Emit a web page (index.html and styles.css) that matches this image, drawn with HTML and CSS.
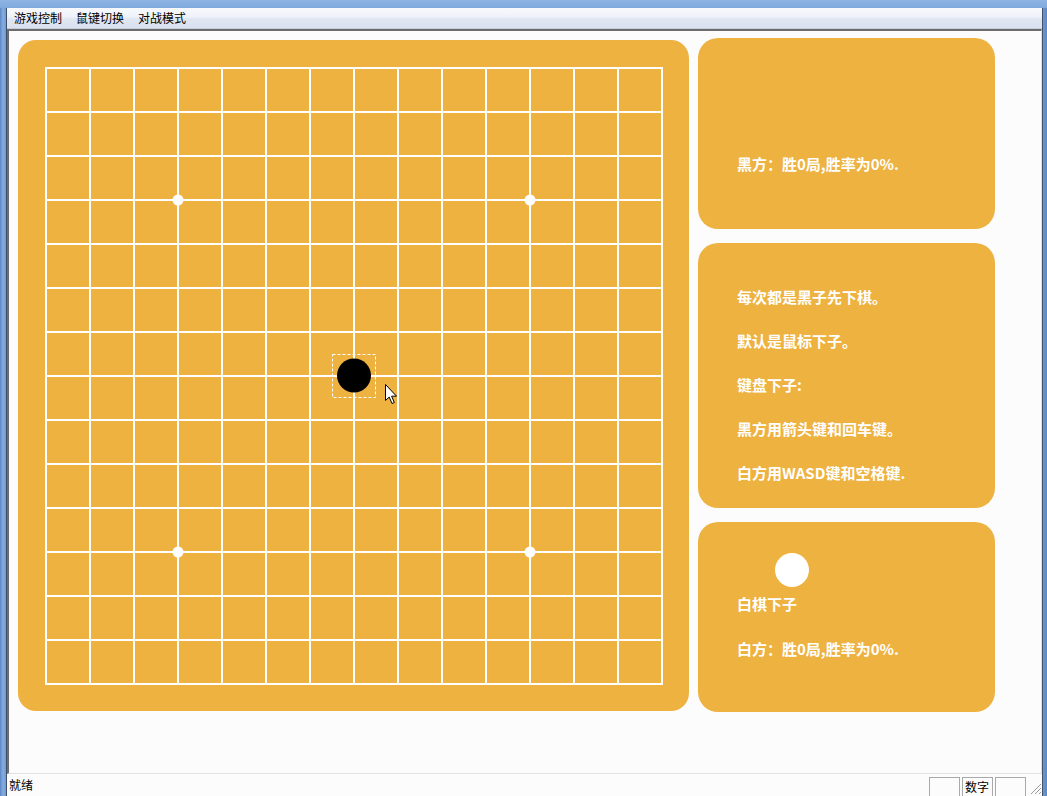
FILE: index.html
```html
<!DOCTYPE html>
<html lang="zh-CN">
<head>
<meta charset="utf-8">
<title>五子棋</title>
<link rel="stylesheet" href="styles.css">
</head>
<body>
<div class="frame">
  <div class="window">
    <div class="menubar">
      <span class="menu-item">游戏控制</span>
      <span class="menu-item">鼠键切换</span>
      <span class="menu-item">对战模式</span>
    </div>
    <div class="client">
      <div class="board">
        <svg class="grid" width="618" height="618" viewBox="0 0 618 618" xmlns="http://www.w3.org/2000/svg">
          <g stroke="#ffffff" stroke-width="2">
            <line x1="1" y1="0" x2="1" y2="618"/>
            <line x1="45" y1="0" x2="45" y2="618"/>
            <line x1="89" y1="0" x2="89" y2="618"/>
            <line x1="133" y1="0" x2="133" y2="618"/>
            <line x1="177" y1="0" x2="177" y2="618"/>
            <line x1="221" y1="0" x2="221" y2="618"/>
            <line x1="265" y1="0" x2="265" y2="618"/>
            <line x1="309" y1="0" x2="309" y2="618"/>
            <line x1="353" y1="0" x2="353" y2="618"/>
            <line x1="397" y1="0" x2="397" y2="618"/>
            <line x1="441" y1="0" x2="441" y2="618"/>
            <line x1="485" y1="0" x2="485" y2="618"/>
            <line x1="529" y1="0" x2="529" y2="618"/>
            <line x1="573" y1="0" x2="573" y2="618"/>
            <line x1="617" y1="0" x2="617" y2="618"/>
            <line y1="1" x1="0" y2="1" x2="618"/>
            <line y1="45" x1="0" y2="45" x2="618"/>
            <line y1="89" x1="0" y2="89" x2="618"/>
            <line y1="133" x1="0" y2="133" x2="618"/>
            <line y1="177" x1="0" y2="177" x2="618"/>
            <line y1="221" x1="0" y2="221" x2="618"/>
            <line y1="265" x1="0" y2="265" x2="618"/>
            <line y1="309" x1="0" y2="309" x2="618"/>
            <line y1="353" x1="0" y2="353" x2="618"/>
            <line y1="397" x1="0" y2="397" x2="618"/>
            <line y1="441" x1="0" y2="441" x2="618"/>
            <line y1="485" x1="0" y2="485" x2="618"/>
            <line y1="529" x1="0" y2="529" x2="618"/>
            <line y1="573" x1="0" y2="573" x2="618"/>
            <line y1="617" x1="0" y2="617" x2="618"/>
          </g>
          <g fill="#ffffff">
            <circle cx="133" cy="133" r="5.5"/>
            <circle cx="485" cy="133" r="5.5"/>
            <circle cx="133" cy="485" r="5.5"/>
            <circle cx="485" cy="485" r="5.5"/>
          </g>
          <rect x="287.5" y="287.5" width="43" height="43" fill="none" stroke="#ffffff" stroke-width="1" stroke-dasharray="3 2"/>
          <circle cx="309" cy="308.5" r="17" fill="#000000"/>
          <path d="M340.5 317.5 L340.5 333.5 L344.2 330 L347 336.5 L349.3 335.5 L346.6 329.2 L351.5 329.2 Z" fill="#ffffff" stroke="#000000" stroke-width="1" stroke-linejoin="miter"/>
        </svg>
      </div>
      <div class="side">
        <div class="panel panel-score">
          <p class="panel-line">黑方：胜0局,胜率为0%.</p>
        </div>
        <div class="panel panel-help">
          <p class="help-line">每次都是黑子先下棋。</p>
          <p class="help-line">默认是鼠标下子。</p>
          <p class="help-line">键盘下子:</p>
          <p class="help-line">黑方用箭头键和回车键。</p>
          <p class="help-line">白方用WASD键和空格键.</p>
        </div>
        <div class="panel panel-turn">
          <div class="turn-stone"></div>
          <p class="panel-line turn-label">白棋下子</p>
          <p class="panel-line turn-score">白方：胜0局,胜率为0%.</p>
        </div>
      </div>
    </div>
    <div class="statusbar">
      <span class="status-text">就绪</span>
      <span class="status-box box-caps"></span>
      <span class="status-box box-num">数字</span>
      <span class="status-box box-scrl"></span>
      <svg class="grip" width="12" height="12" viewBox="0 0 12 12" xmlns="http://www.w3.org/2000/svg">
        <g stroke="#9a9a9a" stroke-width="1">
          <line x1="11" y1="1" x2="1" y2="11"/>
          <line x1="11" y1="5" x2="5" y2="11"/>
          <line x1="11" y1="9" x2="9" y2="11"/>
        </g>
      </svg>
    </div>
  </div>
</div>
</body>
</html>
```

FILE: styles.css
```css
* {
  box-sizing: border-box;
  margin: 0;
  padding: 0;
}

html, body {
  width: 1047px;
  height: 796px;
  overflow: hidden;
}

body {
  font-family: "Noto Sans CJK SC", "Noto Sans", sans-serif;
  background: #6f9bd4;
}

.frame {
  height: 796px;
  padding: 8px 4px 0 6px;
  background:
    linear-gradient(to bottom, #8fb5e5 0, #7fa8dc 8px, rgba(0,0,0,0) 8px),
    linear-gradient(to right, #5b87c4 0, #86addf 3px, #6e9ad3 6px, #6e9ad3 1042px, #5b87c4 1047px);
}

.window {
  width: 1037px;
  height: 788px;
  display: flex;
  flex-direction: column;
  background: #fcfcfc;
  border-left: 1px solid #40506a;
  border-right: 1px solid #40506a;
}

.menubar {
  height: 21px;
  flex: none;
  display: flex;
  align-items: center;
  gap: 14px;
  padding-left: 7px;
  font-size: 12px;
  color: #000;
  background: linear-gradient(to bottom, #f7f9fc 0, #eef2f8 45%, #dfe6f2 55%, #dbe2ef 100%);
  border-bottom: 1px solid #c5ccd8;
}

.menu-item {
  line-height: 20px;
}

.client {
  flex: none;
  height: 745px;
  display: flex;
  align-items: flex-start;
  border-top: 2px solid #6c6c6c;
  border-left: 2px solid #6c6c6c;
  border-right: 1px solid #e2e2e2;
  border-bottom: 1px solid #e2e2e2;
  background: #fcfcfc;
}

.board {
  flex: none;
  width: 671px;
  height: 671px;
  margin: 9px 0 0 9px;
  padding: 27px 26px 26px 27px;
  border-radius: 18px;
  background: #eeb240;
}

.grid {
  display: block;
}

.side {
  flex: none;
  width: 297px;
  margin: 7px 0 0 9px;
  display: flex;
  flex-direction: column;
  gap: 14px;
}

.panel {
  background: #eeb240;
  border-radius: 20px;
  padding-left: 39px;
  color: #ffffff;
  font-weight: 700;
  font-size: 15px;
}

.panel-line {
  line-height: 20px;
  white-space: nowrap;
}

.panel-score {
  height: 191px;
  padding-top: 116px;
}

.panel-help {
  height: 265px;
  padding-top: 32px;
}

.help-line {
  line-height: 44px;
  white-space: nowrap;
}

.panel-turn {
  height: 190px;
  padding-top: 31px;
}

.turn-stone {
  width: 34px;
  height: 34px;
  margin-left: 38px;
  border-radius: 50%;
  background: #ffffff;
}

.turn-label {
  margin-top: 7px;
}

.turn-score {
  margin-top: 25px;
}

.statusbar {
  flex: 1;
  display: flex;
  align-items: flex-end;
  font-size: 12px;
  color: #000;
  background: #fcfcfc;
}

.status-text {
  align-self: center;
  padding-left: 2px;
  margin-right: auto;
  line-height: 16px;
}

.status-box {
  width: 31px;
  height: 19px;
  margin-left: 2px;
  border: 1px solid #a9a9a9;
  border-bottom: none;
  line-height: 17px;
  padding-left: 2px;
  white-space: nowrap;
}

.grip {
  display: block;
  margin: 0 0 1px 4px;
}
```
